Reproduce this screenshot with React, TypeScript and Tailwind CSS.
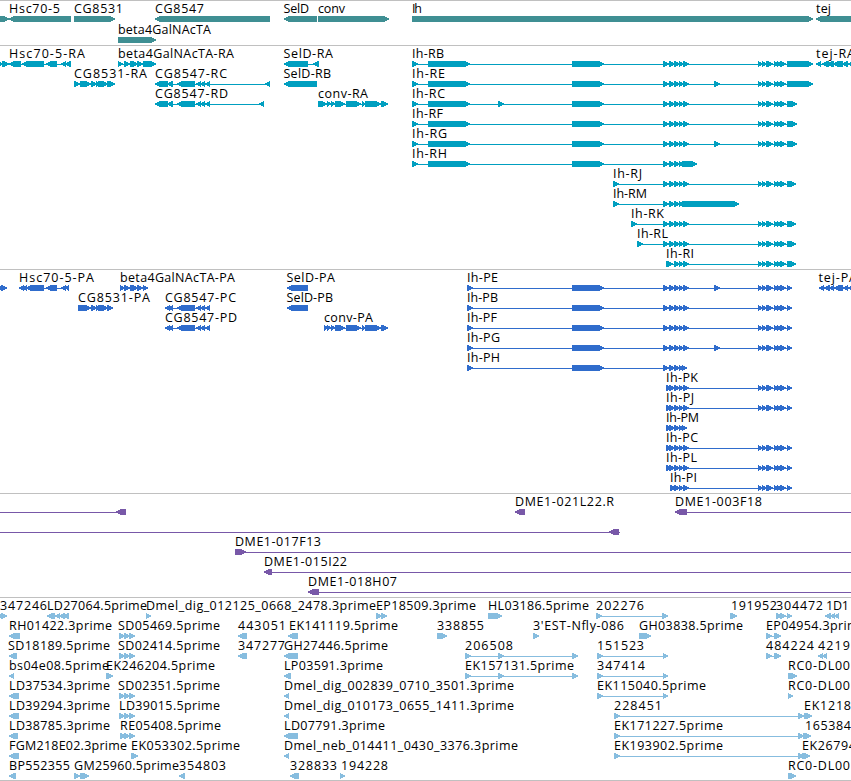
type Span = [number, number];

type Feature = {
  label?: string;
  // left and right edge of the label text
  text?: Span;
  reverse?: boolean;
  blocks: Span[];
  // connector line, defaults to first block start -> last block end
  line?: Span;
};

type Track = {
  id: string;
  className: string;
  rowClassName: string;
  rows: Feature[][];
};

const WIDTH = 851;

const fwd = (label: string, text: Span, blocks: Span[], line?: Span): Feature => ({ label, text, blocks, line });
const rev = (label: string, text: Span, blocks: Span[], line?: Span): Feature => ({
  label,
  text,
  blocks,
  line,
  reverse: true,
});

// Blocks shared between the Ih transcripts
const mid: Span[] = [[663, 669], [669, 675], [674, 680], [679, 684], [683, 689]];
const tail: Span[] = [[758, 763], [762, 767], [766, 773], [774, 779], [777, 782], [780, 786]];
const lead: Span[] = [[412, 418], [428, 470], [572, 604]];
const extra: Span = [714, 720];

const genes: Feature[][] = [
  [
    { blocks: [[-20, 9]] },
    rev('Hsc70-5', [9, 60], [[9, 71]]),
    fwd('CG8531', [74, 123], [[74, 115]]),
    rev('CG8547', [155, 204], [[155, 270]]),
    rev('SelD', [283.5, 309], [[284, 317]]),
    fwd('conv', [318, 345], [[318, 389]]),
    fwd('Ih', [412, 422], [[412, 813]]),
    rev('tej', [816, 831], [[816, 880]]),
  ],
  [fwd('beta4GalNAcTA', [118, 211], [[118, 156]])],
];

const transcripts: Feature[][] = [
  [
    { blocks: [[-3, 3], [2, 9]] },
    rev('Hsc70-5-RA', [9, 85], [[9, 21], [22, 44], [46, 57], [61, 66], [65, 71]]),
    fwd('beta4GalNAcTA-RA', [118, 234], [[118, 123], [124, 130], [130, 138], [137, 143], [143, 156]]),
    rev('SelD-RA', [283.5, 333], [[284, 308], [313, 319]]),
    fwd('Ih-RB', [412, 444], [...lead, ...mid, ...tail, [787, 813]]),
    rev('tej-RA', [816, 855], [[816, 821], [822, 829], [827, 834], [833, 843], [842, 848], [848, 857]]),
  ],
  [
    fwd('CG8531-RA', [74, 147], [[74, 80], [80, 91], [91, 97], [96, 101], [98, 108], [107, 115]]),
    rev('CG8547-RC', [155, 227], [[155, 168], [167, 173], [177, 195], [196, 201], [200, 205], [205, 210], [265, 270]]),
    rev('SelD-RB', [283.5, 331], [[284, 317]]),
    fwd('Ih-RE', [412, 445], [...lead, ...mid, extra, ...tail, [787, 813]]),
  ],
  [
    rev('CG8547-RD', [155, 228], [[155, 168], [167, 173], [177, 195], [196, 201], [200, 205], [205, 210], [259, 264]]),
    fwd('conv-RA', [318, 368], [[318, 327], [327, 331], [331, 335], [335, 345], [346, 361], [362, 365], [365, 381], [381, 388]]),
    fwd('Ih-RC', [412, 445], [...lead, [498, 504], ...mid, ...tail, [787, 797]]),
  ],
  [fwd('Ih-RF', [412, 443], [...lead, ...mid, ...tail, [787, 797]])],
  [fwd('Ih-RG', [412, 447], [...lead, ...mid, extra, ...tail, [787, 797]])],
  [fwd('Ih-RH', [412, 447], [...lead, ...mid.slice(0, 4), [682, 697]])],
  [fwd('Ih-RJ', [613, 642], [[613, 619], ...mid, ...tail, [787, 796]])],
  [fwd('Ih-RM', [613, 647], [[613, 619], ...mid.slice(0, 4), [682, 739]])],
  [fwd('Ih-RK', [631, 664], [[631, 637], ...mid, ...tail, [787, 796]])],
  [fwd('Ih-RL', [637, 668], [[637, 643], ...mid, ...tail, [787, 796]])],
  [fwd('Ih-RI', [666, 694], [[666, 673], ...mid.slice(2), ...tail, [787, 796]])],
];

const cds: Span[] = [...tail, [787, 792]];
const shortMid: Span[] = [[666, 672], [669, 675], [674, 680], [679, 684], [683, 689]];

const proteins: Feature[][] = [
  [
    { blocks: [[-3, 3], [1, 7]] },
    rev('Hsc70-5-PA', [19, 94], [[19, 24], [22, 27], [26, 44], [46, 57], [61, 66], [65, 69]]),
    fwd('beta4GalNAcTA-PA', [120, 235], [[120, 125], [124, 130], [130, 138], [137, 143], [143, 148]]),
    rev('SelD-PA', [286.5, 335], [[287, 308]]),
    fwd('Ih-PE', [467, 498], [[467, 473], [572, 604], ...mid, extra, ...cds]),
    rev('tej-PA', [818.5, 857], [[819, 824], [824, 830], [829, 834], [834, 843], [843, 848], [848, 857]]),
  ],
  [
    fwd('CG8531-PA', [78, 150], [[78, 91], [91, 97], [96, 101], [98, 108], [107, 113]]),
    rev('CG8547-PC', [165, 236], [[165, 170], [168, 173], [177, 195], [196, 201], [200, 205], [205, 210]]),
    rev('SelD-PB', [286.5, 333], [[287, 308]]),
    fwd('Ih-PB', [467, 498], [[467, 473], [572, 604], ...mid, ...cds]),
  ],
  [
    rev('CG8547-PD', [165, 237], [[165, 170], [168, 173], [177, 195], [196, 201], [200, 205], [205, 210]]),
    fwd('conv-PA', [324, 373], [[324, 328], [327, 331], [331, 335], [335, 345], [346, 361], [362, 365], [365, 381], [381, 388]]),
    fwd('Ih-PF', [467, 497], [[467, 473], [572, 604], ...mid, ...cds]),
  ],
  [fwd('Ih-PG', [467, 500], [[467, 473], [572, 604], ...mid, extra, ...cds])],
  [fwd('Ih-PH', [467, 500], [[467, 473], [572, 604], ...mid.slice(0, 4), [682, 687]])],
  [fwd('Ih-PK', [666, 698], [...shortMid, ...cds])],
  [fwd('Ih-PJ', [666, 694], [...shortMid, ...cds])],
  [fwd('Ih-PM', [666, 699], [...shortMid.slice(0, 4), [682, 687]])],
  [fwd('Ih-PC', [666, 698], [...shortMid, ...cds])],
  [fwd('Ih-PL', [666, 697], [...shortMid, ...cds])],
  [fwd('Ih-PI', [670, 697], [[670, 676], ...shortMid.slice(2), ...cds])],
];

const clones: Feature[][] = [
  [
    { blocks: [[116, 126]], reverse: true, line: [0, 126] },
    rev('DME1-021L22.R', [515, 614], [[515, 525]]),
    rev('DME1-003F18', [675, 762], [[675, 687]], [675, WIDTH]),
  ],
  [{ blocks: [[609, 619]], reverse: true, line: [0, 620] }],
  [fwd('DME1-017F13', [235, 321], [[235, 246]], [235, WIDTH])],
  [rev('DME1-015I22', [264, 347], [[264, 272]], [264, WIDTH])],
  [rev('DME1-018H07', [308, 397], [[308, 319]], [308, WIDTH])],
];

const triple: Span[] = [[119, 125], [124, 130], [129, 135]];

const ests: Feature[][] = [
  [
    fwd('347246', [0, 47], [[-3, 3], [1, 7]]),
    rev('LD27064.5prime', [47, 147], [[47, 55], [55, 60], [59, 65], [63, 69]]),
    fwd('Dmel_dig_012125_0668_2478.3prime', [146, 376], [[146, 151]]),
    fwd('EP18509.3prime', [376, 476], [[376, 382], [381, 387]]),
    fwd('HL03186.5prime', [488, 589], [[488, 502]]),
    fwd('202276', [596, 644], [[596, 602], [662, 668]]),
    fwd('191952', [731, 777], [[730, 737]]),
    fwd('304472', [776, 823], [[776, 782], [780, 786], [787, 792]]),
    rev('1D1', [826, 849], [[825, 831], [830, 835], [834, 839]]),
  ],
  [
    rev('RH01422.3prime', [9, 112], [[9, 20]]),
    fwd('SD05469.5prime', [118, 220], triple),
    rev('443051', [238, 286], [[238, 247]]),
    rev('EK141119.5prime', [289, 398], [[288, 298]]),
    fwd('338855', [437, 484], [[437, 447]]),
    fwd("3'EST-Nfly-086", [533, 624], [[533, 539]]),
    fwd('GH03838.5prime', [639, 743], [[639, 651]]),
    fwd('EP04954.3prime', [766, 866], [[766, 772], [774, 781]]),
  ],
  [
    rev('SD18189.5prime', [8, 110], [[9, 17]]),
    fwd('SD02414.5prime', [118, 220], triple),
    rev('347277', [238, 285], [[238, 247]]),
    rev('GH27446.5prime', [284, 388], [[284, 298]]),
    fwd('206508', [465, 513], [[465, 471], [498, 504], [572, 578]]),
    fwd('151523', [597, 644], [[597, 603], [663, 668]]),
    fwd('484224', [766, 814], [[766, 772], [774, 781]]),
    rev('4219', [818, 850], [[818, 823], [822, 827]]),
  ],
  [
    rev('bs04e08.5prime', [9, 109], [[9, 14]]),
    fwd('EK246204.5prime', [106, 215], [[106, 113]]),
    rev('LP03591.3prime', [284, 383], [[284, 291]]),
    fwd('EK157131.5prime', [465, 574], [[465, 471], [498, 504], [572, 578]]),
    fwd('347414', [597, 645], [[597, 603], [663, 668]]),
    fwd('RC0-DL00', [788, 850], [[788, 797]]),
  ],
  [
    rev('LD37534.3prime', [9, 110], [[9, 19]]),
    fwd('SD02351.5prime', [118, 220], triple),
    rev('Dmel_dig_002839_0710_3501.3prime', [284, 514], [[284, 289]]),
    fwd('EK115040.5prime', [597, 706], [[597, 603], [663, 668]]),
    fwd('RC0-DL00', [788, 850], [[788, 793]]),
  ],
  [
    rev('LD39294.3prime', [9, 110], [[9, 19]]),
    fwd('LD39015.5prime', [119, 220], triple),
    rev('Dmel_dig_010173_0655_1411.3prime', [284, 514], [[284, 289]]),
    fwd('228451', [614, 662], [[614, 620], [798, 804], [804, 812]]),
    fwd('EK1218', [804, 851], []),
  ],
  [
    rev('LD38785.3prime', [9, 110], [[9, 18]]),
    fwd('RE05408.5prime', [120, 221], [[120, 126], [124, 130], [129, 135]]),
    rev('LD07791.3prime', [284, 385], [[284, 298]]),
    fwd('EK171227.5prime', [614, 723], [[614, 620], [798, 804], [803, 811]]),
    fwd('165384', [805, 851], []),
  ],
  [
    rev('FGM218E02.3prime', [9, 127], [[9, 19]]),
    fwd('EK053302.5prime', [131, 240], [[131, 138]]),
    rev('Dmel_neb_014411_0430_3376.3prime', [284, 518], [[284, 289]]),
    fwd('EK193902.5prime', [614, 723], [[614, 620], [798, 804], [802, 810]]),
    fwd('EK26794', [802, 856], []),
  ],
  [
    rev('BP552355', [9, 70], [[9, 16]]),
    fwd('GM25960.5prime', [74, 179], [[74, 80], [80, 89]]),
    rev('354803', [179, 226], [[179, 185]]),
    rev('328833', [290, 337], [[290, 299]]),
    fwd('194228', [341, 388], [[340, 345]]),
    fwd('RC0-DL00', [788, 850], [[788, 796]]),
  ],
];

const tracks: Track[] = [
  { id: 'genes', className: 'h-[45px] text-[#3f8f93]', rowClassName: 'h-[21px]', rows: genes },
  { id: 'transcripts', className: 'h-[224px] text-[#009fc0]', rowClassName: 'h-5', rows: transcripts },
  { id: 'proteins', className: 'h-[224px] text-[#2f6ccc]', rowClassName: 'h-5', rows: proteins },
  { id: 'clones', className: 'h-[104px] text-[#7858a8]', rowClassName: 'h-5', rows: clones },
  { id: 'ests', className: 'h-[184px] border-b text-[#87bddf]', rowClassName: 'h-5', rows: ests },
];

// Block with a pointed end, 6px high, head at most 5px long
function blockPoints([start, end]: Span, reverse?: boolean) {
  const head = Math.min(5, end - start);
  if (reverse) {
    return `${end},12 ${start + head},12 ${start},14.4 ${start},15.6 ${start + head},18 ${end},18`;
  }
  return `${start},12 ${end - head},12 ${end},14.4 ${end},15.6 ${end - head},18 ${start},18`;
}

function FeatureGlyph({ feature }: { feature: Feature }) {
  const { label, text, blocks, reverse } = feature;
  const line: Span | undefined =
    feature.line ?? (blocks.length > 1 ? [blocks[0][0], blocks[blocks.length - 1][1] - 1] : undefined);

  return (
    <g>
      {line && <rect x={line[0]} y={15} width={line[1] - line[0]} height={1} />}
      {blocks.map((block, i) => (
        <polygon key={i} points={blockPoints(block, reverse)} />
      ))}
      {label && text && (
        <text x={text[0]} y={9} textLength={text[1] - text[0]} className="fill-black">
          {label}
        </text>
      )}
    </g>
  );
}

export default function App() {
  return (
    <main className="flex h-[781px] w-[851px] flex-col overflow-hidden bg-white font-['Open_Sans',sans-serif] text-[12.5px]">
      {tracks.map((track) => (
        <section
          key={track.id}
          className={`flex shrink-0 flex-col border-t border-[#c0c0c0] pt-[3px] ${track.className}`}
        >
          {track.rows.map((row, i) => (
            <svg
              key={i}
              width={WIDTH}
              className={`block shrink-0 overflow-visible fill-current ${track.rowClassName}`}
              shapeRendering="crispEdges"
            >
              {row.map((feature, j) => (
                <FeatureGlyph key={j} feature={feature} />
              ))}
            </svg>
          ))}
        </section>
      ))}
    </main>
  );
}
